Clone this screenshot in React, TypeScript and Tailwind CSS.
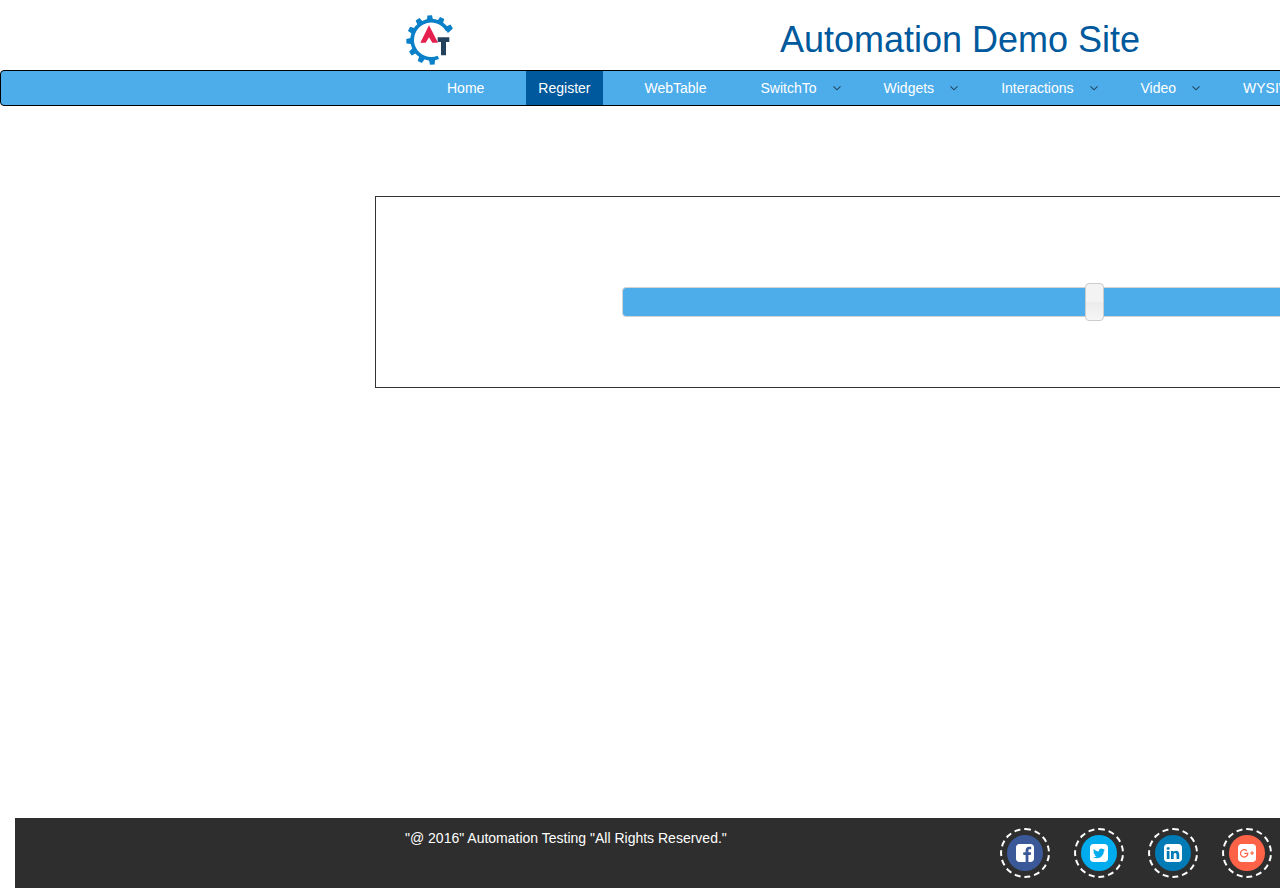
type NavItem = { label: string; active?: boolean; menu?: boolean };

const navItems: NavItem[] = [
  { label: "Home" },
  { label: "Register", active: true },
  { label: "WebTable" },
  { label: "SwitchTo", menu: true },
  { label: "Widgets", menu: true },
  { label: "Interactions", menu: true },
  { label: "Video", menu: true },
  { label: "WYSIWYG" },
];

type Social = { name: string; color: string; path: string; line?: string };

const socials: Social[] = [
  {
    name: "Facebook",
    color: "bg-[#3b5998]",
    path: "M1376 128q119 0 203.5 84.5t84.5 203.5v960q0 119-84.5 203.5t-203.5 84.5h-188v-595h199l30-232h-229v-148q0-56 23.5-84t91.5-28l122-1v-207q-63-9-178-9-136 0-217.5 80t-81.5 226v171h-200v232h200v595h-532q-119 0-203.5-84.5t-84.5-203.5v-960q0-119 84.5-203.5t203.5-84.5h960z",
  },
  {
    name: "Twitter",
    color: "bg-[#00aced]",
    path: "M1408 610q-56 25-121 34 68-40 93-117-65 38-134 51-61-66-153-66-87 0-148.5 61.5t-61.5 148.5q0 29 5 48-129-7-242-65t-192-155q-29 50-29 106 0 114 91 175-47-1-100-26v2q0 75 50 133.5t123 72.5q-29 8-51 8-13 0-39-4 21 63 74.5 104t121.5 42q-116 90-261 90-26 0-50-3 148 94 322 94 112 0 210-35.5t168-95 120.5-137 75-162 24.5-168.5q0-18-1-27 63-45 105-109zm256-194v960q0 119-84.5 203.5t-203.5 84.5h-960q-119 0-203.5-84.5t-84.5-203.5v-960q0-119 84.5-203.5t203.5-84.5h960q119 0 203.5 84.5t84.5 203.5z",
  },
  {
    name: "LinkedIn",
    color: "bg-[#007bb6]",
    path: "M365 1414h231v-694h-231v694zm246-908q-1-52-36-86t-93-34-94.5 34-36.5 86q0 51 35.5 85.5t92.5 34.5h1q59 0 95-34.5t36-85.5zm585 908h231v-398q0-154-73-233t-193-79q-136 0-209 117h2v-101h-231q3 66 0 694h231v-388q0-38 7-56 15-35 45-59.5t74-24.5q116 0 116 157v371zm468-998v960q0 119-84.5 203.5t-203.5 84.5h-960q-119 0-203.5-84.5t-84.5-203.5v-960q0-119 84.5-203.5t203.5-84.5h960q119 0 203.5 84.5t84.5 203.5z",
  },
  {
    name: "Google Plus",
    color: "bg-[#ff6347]",
    path: "M1664 416v960q0 119-84.5 203.5t-203.5 84.5h-960q-119 0-203.5-84.5t-84.5-203.5v-960q0-119 84.5-203.5t203.5-84.5h960q119 0 203.5 84.5t84.5 203.5z",
    line: "M880 705A315 315 0 1 0 970 925H670M1170 896H1490M1330 736V1056",
  },
];

const toothAngles = [-33, -63, -93, -123, -153, -183, -213, -243, -273];

function Logo() {
  return (
    <svg viewBox="30 30 150 150" className="size-[50px]" aria-hidden="true">
      <path
        d="M158 76 A57 57 0 1 0 130 157"
        fill="none"
        stroke="#0a80c8"
        strokeWidth="11"
      />
      {toothAngles.map((angle) => (
        <path
          key={angle}
          d="M162 95 L182 98 L182 112 L162 115 Z"
          fill="#0a80c8"
          transform={`rotate(${angle} 108 105)`}
        />
      ))}
      <path
        d="M102 61 L129 113 L112 113 L102 97 L92 113 L76 113 Z"
        fill="#e5204f"
      />
      <path d="M128 97 H163 V111 H153 V151 H138 V111 H128 Z" fill="#24425c" />
    </svg>
  );
}

function Chevron() {
  return (
    <svg viewBox="0 0 8 8" className="size-2" aria-hidden="true">
      <path d="M0.5 2.3 L4 5.8 L7.5 2.3" fill="none" stroke="#23465f" strokeWidth="1.1" />
    </svg>
  );
}

function NavEntry({ label, active, menu }: NavItem) {
  if (menu) {
    return (
      <button type="button" className="flex h-full items-center gap-4 pr-px pl-3">
        {label}
        <Chevron />
      </button>
    );
  }
  return (
    <a
      href="#"
      className={`flex h-full items-center px-3 ${active ? "bg-[#00599c]" : ""}`}
    >
      {label}
    </a>
  );
}

export default function App() {
  return (
    <div className="overflow-x-clip bg-white font-['Liberation_Sans',Arial,sans-serif] text-sm">
      <div className="flex min-h-screen min-w-[1920px] flex-col">
        <header className="mx-auto grid h-[70px] w-[1170px] grid-cols-3 items-center px-[30px] pt-2.5">
          <a href="#" aria-label="Home page" className="justify-self-start">
            <Logo />
          </a>
          <h1 className="justify-self-center text-4xl whitespace-nowrap text-[#00599c]">
            Automation Demo Site
          </h1>
        </header>

        <nav className="h-9 rounded border border-black bg-[#4dadeb] text-white">
          <ul className="mx-auto flex h-full w-[1170px] gap-[30px] pl-[60px]">
            {navItems.map((item) => (
              <li key={item.label}>
                <NavEntry {...item} />
              </li>
            ))}
          </ul>
        </nav>

        <main className="mx-auto mt-[90px] w-[1170px] border border-[#333] pt-[90px] pb-[70px] pl-[246px]">
          <input
            type="range"
            aria-label="Slider"
            min={0}
            max={100}
            defaultValue={70}
            className="block h-[30px] w-[681px] appearance-none rounded border border-[#d3d3d3] bg-[#4dadeb] [&::-webkit-slider-runnable-track]:h-7 [&::-webkit-slider-thumb]:-mt-[5px] [&::-webkit-slider-thumb]:h-[38px] [&::-webkit-slider-thumb]:w-[19px] [&::-webkit-slider-thumb]:appearance-none [&::-webkit-slider-thumb]:rounded [&::-webkit-slider-thumb]:border [&::-webkit-slider-thumb]:border-[#ccc] [&::-webkit-slider-thumb]:bg-[linear-gradient(#f3f3f3_50%,#ebebeb_50%,#f6f6f6)]"
          />
        </main>

        <footer className="mt-auto ml-[15px] bg-[#2e2e2e] text-white">
          <div className="mx-auto flex w-[1185px] items-start py-2.5 pl-[30px]">
            <p className="w-[595px] leading-5">
              "@ 2016" Automation Testing "All Rights Reserved."
            </p>
            <ul className="flex gap-6">
              {socials.map(({ name, color, path, line }) => (
                <li key={name}>
                  <a
                    href="#"
                    aria-label={name}
                    className="flex size-[50px] items-center justify-center rounded-full border-2 border-dashed border-white"
                  >
                    <span
                      className={`flex size-9 items-center justify-center rounded-full ${color}`}
                    >
                      <svg
                        viewBox="128 128 1536 1536"
                        className="size-[18px] fill-white"
                        aria-hidden="true"
                      >
                        <path d={path} />
                        {line && (
                          <path d={line} fill="none" stroke="#ff6347" strokeWidth="105" />
                        )}
                      </svg>
                    </span>
                  </a>
                </li>
              ))}
            </ul>
          </div>
        </footer>
      </div>
    </div>
  );
}
